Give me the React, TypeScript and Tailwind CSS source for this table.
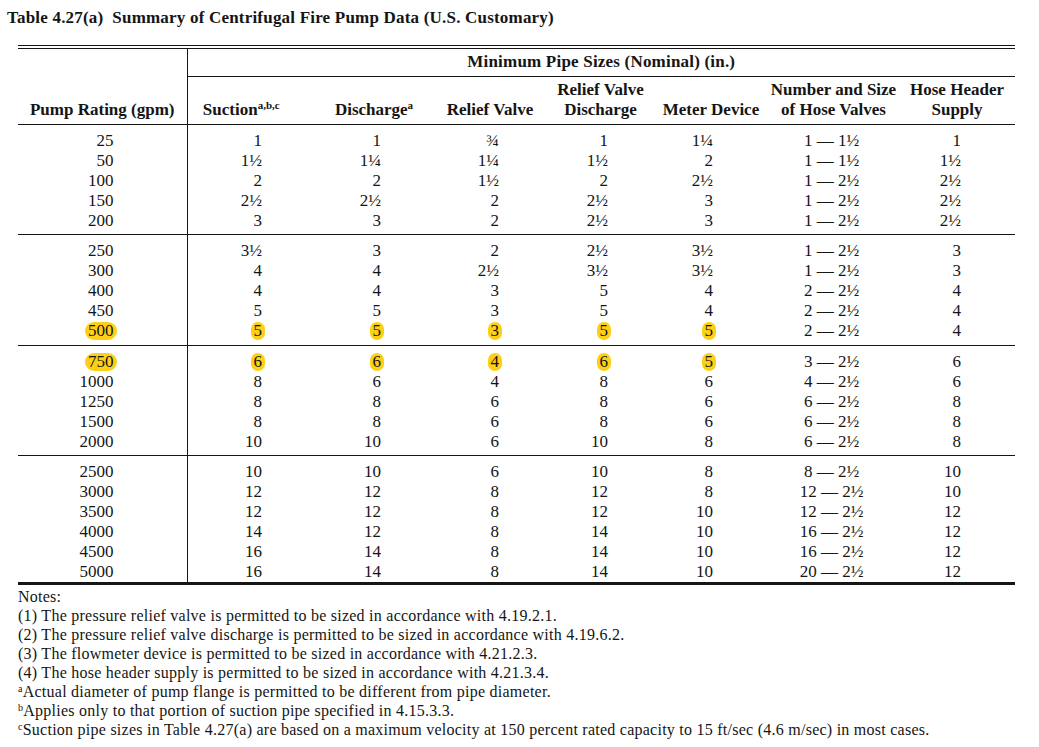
import React from 'react';

type Row = { gpm: string; cells: string[]; hl?: boolean };

const groups: Row[][] = [
  [
    { gpm: '25', cells: ['1', '1', '¾', '1', '1¼', '1 — 1½', '1'] },
    { gpm: '50', cells: ['1½', '1¼', '1¼', '1½', '2', '1 — 1½', '1½'] },
    { gpm: '100', cells: ['2', '2', '1½', '2', '2½', '1 — 2½', '2½'] },
    { gpm: '150', cells: ['2½', '2½', '2', '2½', '3', '1 — 2½', '2½'] },
    { gpm: '200', cells: ['3', '3', '2', '2½', '3', '1 — 2½', '2½'] },
  ],
  [
    { gpm: '250', cells: ['3½', '3', '2', '2½', '3½', '1 — 2½', '3'] },
    { gpm: '300', cells: ['4', '4', '2½', '3½', '3½', '1 — 2½', '3'] },
    { gpm: '400', cells: ['4', '4', '3', '5', '4', '2 — 2½', '4'] },
    { gpm: '450', cells: ['5', '5', '3', '5', '4', '2 — 2½', '4'] },
    { gpm: '500', cells: ['5', '5', '3', '5', '5', '2 — 2½', '4'], hl: true },
  ],
  [
    { gpm: '750', cells: ['6', '6', '4', '6', '5', '3 — 2½', '6'], hl: true },
    { gpm: '1000', cells: ['8', '6', '4', '8', '6', '4 — 2½', '6'] },
    { gpm: '1250', cells: ['8', '8', '6', '8', '6', '6 — 2½', '8'] },
    { gpm: '1500', cells: ['8', '8', '6', '8', '6', '6 — 2½', '8'] },
    { gpm: '2000', cells: ['10', '10', '6', '10', '8', '6 — 2½', '8'] },
  ],
  [
    { gpm: '2500', cells: ['10', '10', '6', '10', '8', '8 — 2½', '10'] },
    { gpm: '3000', cells: ['12', '12', '8', '12', '8', '12 — 2½', '10'] },
    { gpm: '3500', cells: ['12', '12', '8', '12', '10', '12 — 2½', '12'] },
    { gpm: '4000', cells: ['14', '12', '8', '14', '10', '16 — 2½', '12'] },
    { gpm: '4500', cells: ['16', '14', '8', '14', '10', '16 — 2½', '12'] },
    { gpm: '5000', cells: ['16', '14', '8', '14', '10', '20 — 2½', '12'] },
  ],
];

// right padding per data column so the numbers line up like the printed table
const cellPad = ['pr-[48px] text-right', 'pr-[57px] text-right', 'pr-[48px] text-right', 'pr-[46px] text-right', 'pr-[55px] text-right', 'pr-[4px] text-center', 'pr-[54px] text-right'];

// bottom padding of the last row in each group
const groupPb = ['pb-[3px]', 'pb-[4px]', 'pb-[3px]', 'pb-[0px]'];

function Mark({ children, on }: { children: React.ReactNode; on?: boolean }) {
  if (!on) return <>{children}</>;
  return <span className="inline-block -mx-[3px] px-[3px] rounded-full bg-[#fdd017] leading-[18px]">{children}</span>;
}

export default function App() {
  return (
    <div className="w-[1039px] h-[747px] bg-white text-[#151515] font-['Liberation_Serif',serif] overflow-hidden">
      <div className="pl-[7px] pt-[8px] text-[17px] leading-[20px] font-bold tracking-[0.2px]">
        Table 4.27(a)&nbsp; Summary of Centrifugal Fire Pump Data (U.S. Customary)
      </div>

      <div className="ml-[18px] w-[997px] mt-[17px]">
        <div className="h-[4px] border-y border-[#151515]" />
        <table className="w-full table-fixed border-collapse text-[17px] leading-[20px]">
          <colgroup>
            <col className="w-[169px]" />
            <col className="w-[123px]" />
            <col className="w-[128px]" />
            <col className="w-[109px]" />
            <col className="w-[107px]" />
            <col className="w-[114px]" />
            <col className="w-[131px]" />
            <col className="w-[116px]" />
          </colgroup>
          <thead className="font-bold">
            <tr>
              <th rowSpan={2} className="align-bottom pb-[4px] border-r border-[#151515] font-bold">
                Pump Rating (gpm)
              </th>
              <th colSpan={7} className="h-[27px] border-b border-[#151515] font-bold tracking-[0.2px]">
                Minimum Pipe Sizes (Nominal) (in.)
              </th>
            </tr>
            <tr className="border-b border-[#151515]">
              <th className="h-[48px] align-bottom pb-[4px] pr-[15px] font-bold">
                Suction<sup className="text-[11px]">a,b,c</sup>
              </th>
              <th className="align-bottom pb-[4px] font-bold">
                Discharge<sup className="text-[11px]">a</sup>
              </th>
              <th className="align-bottom pb-[4px] pr-[5px] font-bold">Relief Valve</th>
              <th className="align-bottom pb-[4px] font-bold">
                Relief Valve
                <br />
                Discharge
              </th>
              <th className="align-bottom pb-[4px] font-bold whitespace-nowrap">Meter Device</th>
              <th className="align-bottom pb-[4px] font-bold whitespace-nowrap">
                Number and Size
                <br />
                of Hose Valves
              </th>
              <th className="align-bottom pb-[4px] font-bold whitespace-nowrap">
                Hose Header
                <br />
                Supply
              </th>
            </tr>
          </thead>
          {groups.map((g, gi) => (
            <tbody key={gi} className={gi === groups.length - 1 ? 'border-b-[3px] border-[#151515]' : 'border-b border-[#151515]'}>
              {g.map((r, ri) => {
                const first = ri === 0;
                const last = ri === g.length - 1;
                const pad = `${first ? 'pt-[6px]' : ''} ${last ? groupPb[gi] : ''}`;
                return (
                  <tr key={r.gpm}>
                    <td className={`text-right pr-[73px] border-r border-[#151515] ${pad}`}>
                      <Mark on={r.hl}>{r.gpm}</Mark>
                    </td>
                    {r.cells.map((c, ci) => (
                      <td key={ci} className={`${cellPad[ci]} whitespace-nowrap ${pad}`}>
                        <Mark on={r.hl && ci < 5}>{c}</Mark>
                      </td>
                    ))}
                  </tr>
                );
              })}
            </tbody>
          ))}
        </table>

        <div className="mt-[2px] text-[16px] leading-[19px] tracking-[0.25px]">
          <p>Notes:</p>
          <p>(1) The pressure relief valve is permitted to be sized in accordance with 4.19.2.1.</p>
          <p>(2) The pressure relief valve discharge is permitted to be sized in accordance with 4.19.6.2.</p>
          <p>(3) The flowmeter device is permitted to be sized in accordance with 4.21.2.3.</p>
          <p>(4) The hose header supply is permitted to be sized in accordance with 4.21.3.4.</p>
          <p>
            <sup className="text-[10px]">a</sup>Actual diameter of pump flange is permitted to be different from pipe diameter.
          </p>
          <p>
            <sup className="text-[10px]">b</sup>Applies only to that portion of suction pipe specified in 4.15.3.3.
          </p>
          <p>
            <sup className="text-[10px]">c</sup>Suction pipe sizes in Table 4.27(a) are based on a maximum velocity at 150 percent rated capacity to 15 ft/sec (4.6 m/sec) in most cases.
          </p>
        </div>
      </div>
    </div>
  );
}
